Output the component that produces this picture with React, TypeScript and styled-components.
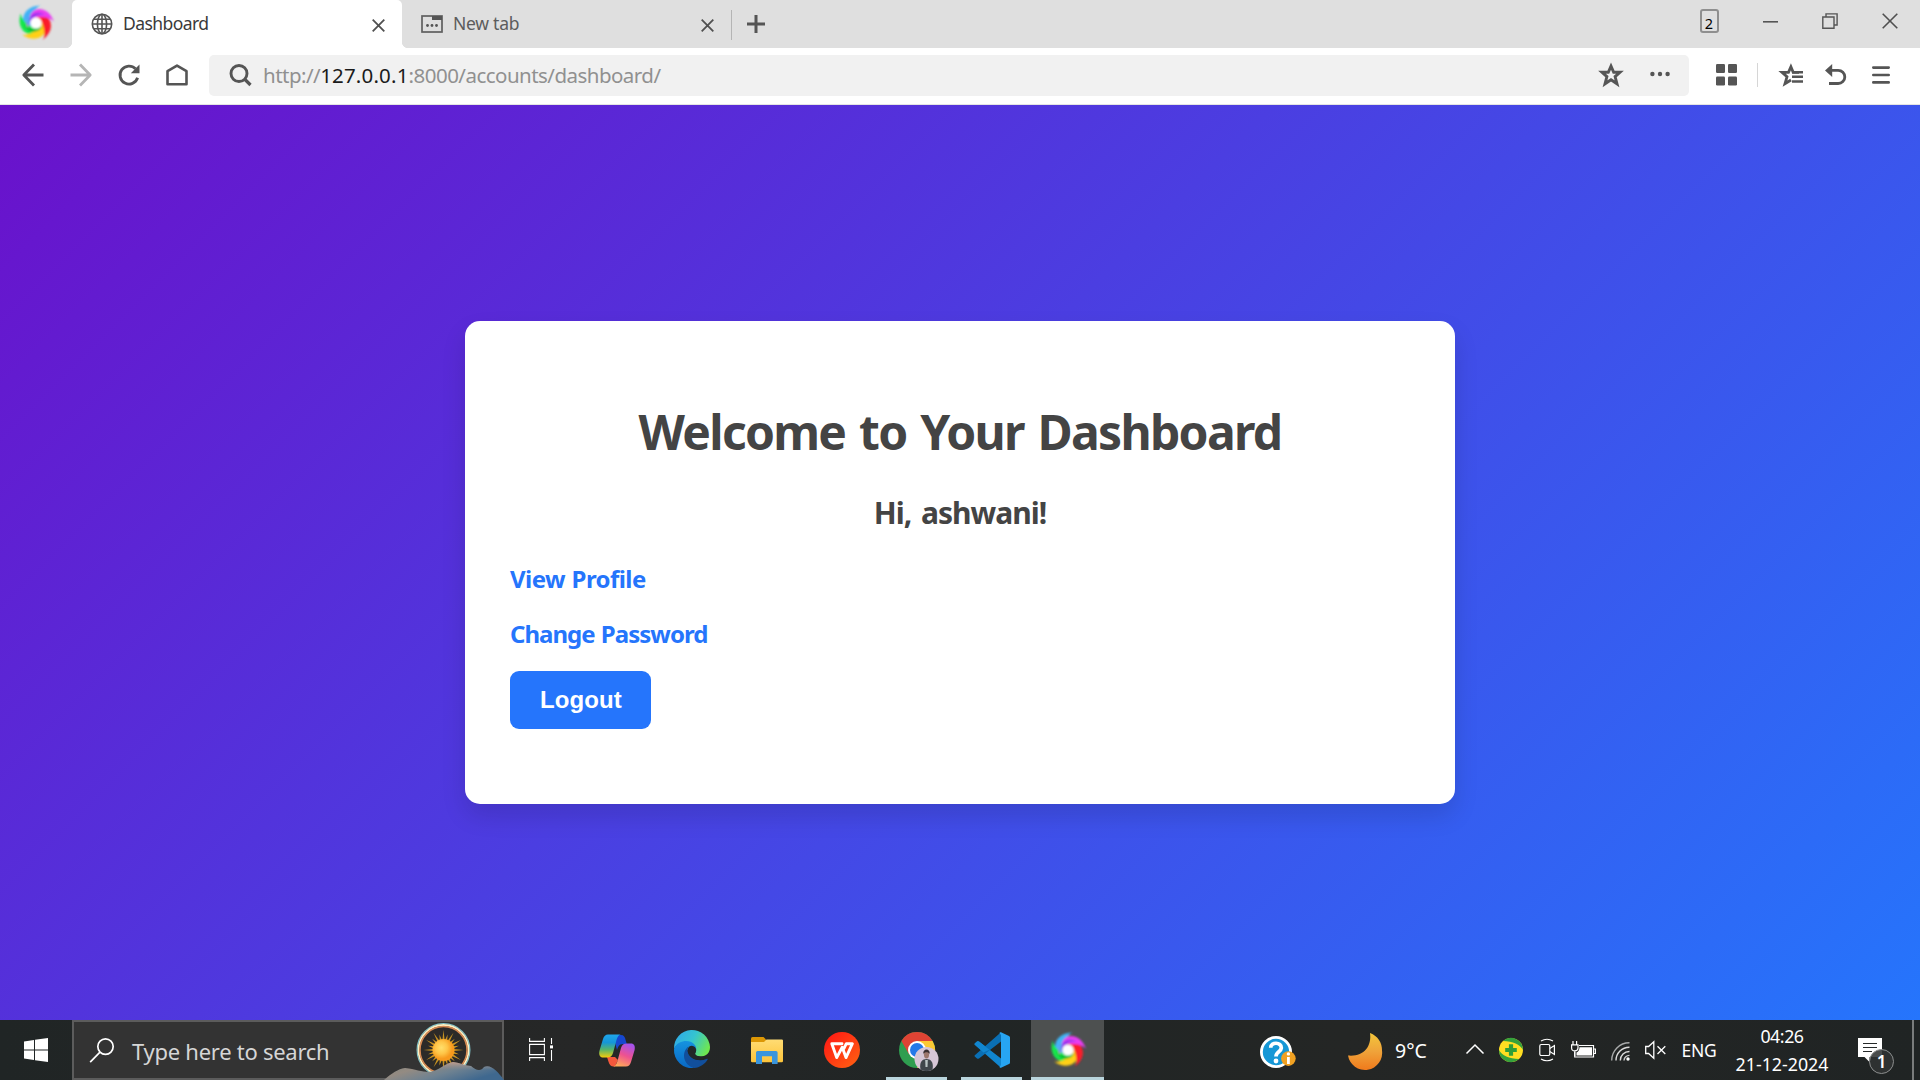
import React from 'react';
import styled, { createGlobalStyle } from 'styled-components';

const Global = createGlobalStyle`
  * { box-sizing: border-box; }
  html, body { margin: 0; padding: 0; overflow: hidden; }
  body { font-family: "Noto Sans", "Open Sans", sans-serif; }
  svg { display: block; flex: none; overflow: visible; }
`;

/* ---------- layout ---------- */

const Screen = styled.div`
  display: flex;
  flex-direction: column;
  width: 1920px;
  height: 1080px;
  overflow: hidden;
`;

const Slot = styled.div<{ $w: number; $left?: number; $dy?: number }>`
  flex: none;
  display: flex;
  align-items: center;
  justify-content: center;
  width: ${(p) => p.$w}px;
  height: 100%;
  margin-left: ${(p) => p.$left ?? 0}px;
  padding-top: ${(p) => Math.max(0, (p.$dy ?? 0) * 2)}px;
  padding-bottom: ${(p) => Math.max(0, -(p.$dy ?? 0) * 2)}px;
`;

const Spacer = styled.div`
  flex: 1;
`;

/* ---------- browser chrome ---------- */

const TabStrip = styled.header`
  flex: none;
  display: flex;
  align-items: stretch;
  height: 48px;
  background: #dfdfdf;
`;

const Tab = styled.div<{ $active?: boolean }>`
  position: relative;
  display: flex;
  align-items: center;
  width: ${(p) => (p.$active ? 330 : 329)}px;
  height: 48px;
  padding: 0 17px 0 19px;
  border-radius: 5px 5px 0 0;
  background: ${(p) => (p.$active ? '#fff' : 'transparent')};
  color: ${(p) => (p.$active ? '#3a3a3a' : '#5c5c5c')};

  &::before,
  &::after {
    content: '';
    display: ${(p) => (p.$active ? 'block' : 'none')};
    position: absolute;
    bottom: 0;
    width: 5px;
    height: 5px;
  }
  &::before {
    left: -5px;
    background: radial-gradient(circle at 0 0, transparent 4.6px, #fff 5px);
  }
  &::after {
    right: -5px;
    background: radial-gradient(circle at 100% 0, transparent 4.6px, #fff 5px);
  }
`;

const TabTitle = styled.span<{ $spacing: number }>`
  flex: 1;
  margin-left: 10px;
  font-size: 17.5px;
  line-height: 24px;
  letter-spacing: ${(p) => p.$spacing}px;
  padding-bottom: 2px;
`;

const TabRule = styled.div`
  width: 1px;
  height: 30px;
  margin-top: 10px;
  background: #b4b4b4;
`;

const TabCount = styled.div`
  display: flex;
  align-items: center;
  justify-content: center;
  width: 19px;
  height: 24px;
  border: 2px solid #8f8f8f;
  border-radius: 3px;
  padding-top: 4px;
  font-size: 14.5px;
  line-height: 18px;
  color: #000;
`;

const Toolbar = styled.nav`
  flex: none;
  display: flex;
  align-items: center;
  height: 57px;
  padding: 0 16px 2px 9px;
  background: #fff;
  border-bottom: 1px solid #e4e4e4;
`;

const AddressBar = styled.div`
  display: flex;
  align-items: center;
  width: 1480px;
  height: 41px;
  margin-left: 8px;
  padding-left: 20px;
  border-radius: 5px;
  background: #f1f1f1;
`;

const Url = styled.span`
  flex: 1;
  margin-left: 11px;
  font-size: 20.5px;
  line-height: 30px;
  color: #909090;
  letter-spacing: -0.53px;

  b {
    font-weight: 400;
    color: #1b1b1b;
    letter-spacing: 0.18px;
  }
`;

const ToolbarRule = styled.div`
  width: 1px;
  height: 24px;
  background: #d6d6d6;
`;

/* ---------- page ---------- */

const Page = styled.main`
  flex: 1;
  min-height: 0;
  padding-top: 216px;
  background: linear-gradient(135deg, #6a11cb, #2575fc);
`;

const Card = styled.section`
  display: flex;
  flex-direction: column;
  align-items: flex-start;
  width: 990px;
  height: 483px;
  margin: 0 auto;
  padding: 78px 45px 0;
  border-radius: 15px;
  background: #fff;
  box-shadow: 0 12px 24px rgba(0, 0, 0, 0.12);
`;

const Title = styled.h1`
  margin: 0;
  align-self: center;
  font-size: 48px;
  line-height: 66px;
  font-weight: 700;
  letter-spacing: -1.7px;
  word-spacing: 3px;
  color: #444;
`;

const Greeting = styled.h2`
  margin: 28px 0 9px;
  align-self: center;
  font-size: 30px;
  line-height: 40px;
  font-weight: 700;
  letter-spacing: -1px;
  word-spacing: 3px;
  color: #444;
`;

const CardLink = styled.a<{ $spacing: number }>`
  margin-top: 19px;
  font-size: 24px;
  line-height: 36px;
  font-weight: 700;
  letter-spacing: ${(p) => p.$spacing}px;
  word-spacing: 1px;
  color: #2575fc;
  text-decoration: none;
`;

const LogoutButton = styled.button`
  width: 141px;
  height: 58px;
  margin-top: 19px;
  padding: 0 0 0 1px;
  border: 0;
  border-radius: 9px;
  background: #2575fc;
  color: #fff;
  font: 700 24px/30px "Liberation Sans", Arial, sans-serif;
  letter-spacing: 0.1px;
`;

/* ---------- taskbar ---------- */

const Taskbar = styled.footer`
  flex: none;
  display: flex;
  align-items: stretch;
  height: 60px;
  background: linear-gradient(90deg, #202525, #262727 30%, #202525 50%, #242625 70%, #202424);
  color: #fff;
`;

const SearchBox = styled.div`
  position: relative;
  display: flex;
  align-items: center;
  width: 432px;
  padding-left: 16px;
  border: 2px solid #5c5c5c;
  background: #333;
`;

const SearchText = styled.span`
  margin-left: 17px;
  padding-top: 2px;
  font-size: 22px;
  line-height: 30px;
  letter-spacing: -0.27px;
  color: #d6d6d6;
`;

const SearchArt = styled.svg`
  position: absolute;
  right: -2px;
  bottom: -2px;
`;

const TaskApp = styled.div<{ $active?: boolean }>`
  display: flex;
  flex-direction: column;
  align-items: center;
  justify-content: center;
  position: relative;
  width: ${(p) => (p.$active ? 73 : 75)}px;
  margin-left: ${(p) => (p.$active ? 1 : 0)}px;
  background: ${(p) => (p.$active ? '#4d5050' : 'transparent')};
`;

const Running = styled.i<{ $w: number }>`
  position: absolute;
  bottom: 0;
  width: ${(p) => p.$w}px;
  height: 3px;
  background: #b9d5dd;
`;

const Temperature = styled.span`
  width: 61px;
  padding: 2px 0 0 13px;
  align-self: center;
  font-size: 19.5px;
  line-height: 28px;
`;

const Language = styled.span`
  width: 48px;
  margin-left: 4px;
  align-self: center;
  text-align: center;
  font-size: 17.5px;
  line-height: 24px;
  letter-spacing: -0.3px;
`;

const Clock = styled.div`
  display: flex;
  flex-direction: column;
  align-items: center;
  width: 118px;
  padding-top: 2px;
  font-size: 17.8px;
  line-height: 28px;

  span:first-child {
    letter-spacing: -0.45px;
  }
`;

const Notice = styled.div`
  position: relative;
  width: 71px;
  padding: 18px 0 0 17px;
`;

const NoticeCount = styled.span`
  position: absolute;
  left: 28px;
  top: 29px;
  display: flex;
  align-items: center;
  justify-content: center;
  width: 25px;
  height: 25px;
  border: 1px solid #8c8e8e;
  border-radius: 50%;
  background: rgba(48, 51, 51, 0.88);
  font-size: 17px;
  font-weight: 600;
  line-height: 24px;
`;

const PeekEdge = styled.div`
  width: 8px;
  border-left: 2px solid #7a7c7c;
`;

/* ---------- drawings ---------- */

const blade = 'M-9 3C-13 -15 14 -22 18 2C15 -3 8 -5 2 -5.5C-3 -6 -7 -2 -9 3Z';

const Swirl = ({ id }: { id: string }) => (
  <svg width="36" height="36" viewBox="-18 -18 36 36">
    <defs>
      <filter id={id} x="-20%" y="-20%" width="140%" height="140%">
        <feGaussianBlur stdDeviation="0.9" />
      </filter>
    </defs>
    <g filter={`url(#${id})`}>
      {[
        ['#3fb4f7', 288],
        ['#14e64c', 216],
        ['#ffd012', 144],
        ['#fb1f2c', 72],
        ['#e83cf2', 0],
      ].map(([c, r]) => (
        <path key={r} d={blade} fill={c as string} transform={`rotate(${(r as number) - 10})`} />
      ))}
      <path d="M-8.500 2C-11 -5 -7 -13 1 -15C-5 -11 -8 -6 -5 -3Z" fill="#3fb4f7" />
      <path d="M-7 1C-8 -9 2 -13 8 -8C3 -10 -4 -7 -7 1Z" fill="#8a35ec" />
      <path d="M-7 1C-8 -9 2 -13 8 -8C3 -10 -4 -7 -7 1Z" fill="#07b928" transform="rotate(216)" />
      <circle r="5.6" fill="#fff" />
    </g>
  </svg>
);

const Globe = () => (
  <svg width="22" height="22" viewBox="0 0 22 22" fill="none" stroke="#555" strokeWidth="1.6">
    <circle cx="11" cy="11" r="9.7" />
    <ellipse cx="11" cy="11" rx="4.6" ry="9.7" />
    <path d="M11 1.5v19M1.5 11h19M3 6.3h16M3 15.7h16" />
  </svg>
);

const NewTabIcon = () => (
  <svg width="22" height="18" viewBox="0 0 22 18">
    <rect x="1" y="1" width="20" height="16" fill="none" stroke="#606060" strokeWidth="1.7" />
    <path d="M11 1h10v4H11z" fill="#555" />
    <g fill="#555">
      <circle cx="6.5" cy="10.5" r="1.4" />
      <circle cx="11" cy="10.5" r="1.4" />
      <circle cx="15.5" cy="10.5" r="1.4" />
    </g>
  </svg>
);

const Cross = ({ size, w }: { size: number; w: number }) => (
  <svg width={size} height={size} viewBox={`0 0 ${size} ${size}`} stroke="#505050" strokeWidth={w}>
    <path d={`M.7 .7L${size - 0.7} ${size - 0.7}M${size - 0.7} .7L.7 ${size - 0.7}`} />
  </svg>
);

const Arrow = ({ color, flip }: { color: string; flip?: boolean }) => (
  <svg width="22" height="24" viewBox="0 0 22 24" fill="none" stroke={color} strokeWidth="2.8">
    <path transform={flip ? 'matrix(-1 0 0 1 22 0)' : undefined} d="M12 1.5L1.8 12L12 22.5M2 12H21.5" strokeLinejoin="round" />
  </svg>
);

const Reload = () => (
  <svg width="22" height="22" viewBox="0 0 22 22">
    <path d="M17.5 4.8A9 9 0 1 0 19.6 13.8" fill="none" stroke="#555" strokeWidth="2.8" />
    <path d="M21.5 .6V9.3H12.8Z" fill="#555" />
  </svg>
);

const Home = () => (
  <svg width="22" height="22" viewBox="0 0 22 22" fill="none" stroke="#555" strokeWidth="2.6" strokeLinejoin="round">
    <path d="M1.5 7.2L11 1.6L20.5 7.2V20.3H1.5Z" />
  </svg>
);

const SearchGlass = () => (
  <svg width="23" height="22" viewBox="0 0 23 22" fill="none" stroke="#555" strokeWidth="2.9">
    <circle cx="10" cy="9.5" r="8" />
    <path d="M15.5 15L21.5 21" strokeWidth="3.2" />
  </svg>
);

const Star = () => (
  <svg width="24" height="24" viewBox="0 0 24 24" fill="none" stroke="#555" strokeWidth="2.9">
    <path d="M12 3.200L14.700 9.300H21L16.100 13.600L18 20.800L12 16.800L6 20.800L7.900 13.600L3 9.300H9.300Z" />
  </svg>
);

const Dots = () => (
  <svg width="20" height="6" viewBox="0 0 20 6" fill="#555">
    <circle cx="2.4" cy="3" r="2.2" />
    <circle cx="10" cy="3" r="2.2" />
    <circle cx="17.6" cy="3" r="2.2" />
  </svg>
);

const Tiles = () => (
  <svg width="21" height="22" viewBox="0 0 21 22" fill="#555">
    {[0, 12].map((x) => [0, 12.5].map((y) => <rect key={`${x}-${y}`} x={x} y={y} width="9" height="9" rx="1.2" />))}
  </svg>
);

const Favourites = () => (
  <svg width="24" height="24" viewBox="0 0 24 24">
    <path d="M20 9.3H14.2L11.9 3.8L9.5 9.3H3L8 13.8L6 20.7L12 17" fill="none" stroke="#555" strokeWidth="2.8" />
    <path d="M13 9.2H24M13 13.8H24M13 18.4H24" stroke="#555" strokeWidth="2.5" />
  </svg>
);

const Undo = () => (
  <svg width="22" height="22" viewBox="0 0 22 22">
    <path d="M4 6.3H13.2A6.6 6.6 0 0 1 13.2 19.5H4" fill="none" stroke="#555" strokeWidth="2.8" />
    <path d="M7.2 0V13L0 6.4Z" fill="#555" />
  </svg>
);

const Menu = () => (
  <svg width="18" height="18" viewBox="0 0 18 18" stroke="#555" strokeWidth="2.6" strokeLinecap="round">
    <path d="M1.3 1.6H16.7M1.3 9H16.7M1.3 16.4H16.7" />
  </svg>
);

const Restore = () => (
  <svg width="16" height="16" viewBox="0 0 16 16" fill="none" stroke="#555" strokeWidth="1.4">
    <path d="M4 4V.9H15.1V12H12M.8 4H12V15.2H.8Z" />
  </svg>
);

const WindowsLogo = () => (
  <svg width="24" height="24" viewBox="0 0 24 24" fill="#fff">
    <path d="M0 3.4L10 2V11.4H0ZM11 1.8L24 0V11.4H11ZM0 12.5H10V22L0 20.6ZM11 12.5H24V24L11 22.2Z" />
  </svg>
);

const TaskGlass = () => (
  <svg width="25" height="25" viewBox="0 0 25 25" fill="none" stroke="#fff" strokeWidth="1.7">
    <circle cx="15.500" cy="8.6" r="7.7" />
    <path d="M10 14.2L.2 24.2" />
  </svg>
);

const rays = Array.from({ length: 24 }, (_, i) => i * 15);

const hills =
  'M0 60C8 53 14 49 21 48C31 49 38 52 45 52C54 51 62 43 69 42C77 43 82 46 87 46C91 50 97 52 100 47C107 44 114 52 120 60Z';

const SunArt = () => (
  <SearchArt width="120" height="60" viewBox="0 0 120 60">
    <defs>
      <radialGradient id="sun" cx=".4" cy=".4">
        <stop offset="0" stopColor="#ffdf6b" />
        <stop offset=".55" stopColor="#fec548" />
        <stop offset="1" stopColor="#f79a1d" />
      </radialGradient>
      <linearGradient id="hill" x1="0" y1="0" x2="1" y2=".5">
        <stop offset="0" stopColor="#7b8580" />
        <stop offset=".35" stopColor="#948b82" />
        <stop offset=".65" stopColor="#6f8291" />
        <stop offset="1" stopColor="#3f688f" />
      </linearGradient>
      <linearGradient id="haze" x1="0" y1="0" x2="0" y2="1">
        <stop offset="0" stopColor="#d5a38f" stopOpacity=".75" />
        <stop offset=".45" stopColor="#9a938e" stopOpacity="0" />
      </linearGradient>
    </defs>
    <circle cx="59.5" cy="30" r="26" fill="#2c2a28" />
    <circle cx="59.5" cy="30" r="26.4" fill="none" stroke="#7fc3c9" strokeWidth="1.2" />
    <circle cx="59.5" cy="30" r="25" fill="none" stroke="#fff0c2" strokeWidth="1.8" />
    <circle cx="59.5" cy="30" r="23.5" fill="none" stroke="#d88a52" strokeWidth="1.5" />
    <g fill="#c99422">
      {rays.map((a, i) => (
        <path key={a} d={`M-1.1 -10L0 ${i % 2 ? -16 : -20}L1.1 -10Z`} transform={`translate(59.5 30) rotate(${a})`} />
      ))}
    </g>
    <circle cx="59.5" cy="30" r="11" fill="url(#sun)" />
    <path d={hills} fill="url(#hill)" />
    <path d={hills} fill="url(#haze)" />
  </SearchArt>
);

const TaskView = () => (
  <svg width="25" height="23" viewBox="0 0 25 23" fill="none" stroke="#fff" strokeWidth="1.1">
    <path d="M.6 0V3.4H15.4V0M.6 6.4H15.4V16.6H.6ZM.6 23V19.6H15.4V23M22.5 0V6M22.5 12V23" />
    <path d="M21 7.4h3v3h-3z" fill="#fff" stroke="none" />
  </svg>
);

const Copilot = () => (
  <svg width="36" height="33" viewBox="0 0 36 33">
    <defs>
      <linearGradient id="cpA" x1="0" y1="0" x2="0" y2="1">
        <stop offset="0" stopColor="#1fa6ec" />
        <stop offset=".35" stopColor="#1596d8" />
        <stop offset=".65" stopColor="#55b46c" />
        <stop offset="1" stopColor="#f5cc0b" />
      </linearGradient>
      <linearGradient id="cpB" x1=".7" y1="0" x2=".3" y2="1">
        <stop offset="0" stopColor="#a552ec" />
        <stop offset=".5" stopColor="#ee5290" />
        <stop offset="1" stopColor="#ffab58" />
      </linearGradient>
    </defs>
    <path d="M14 1H22C25 1 26 3 26.6 6L27.8 10H24C20 10 19 13 18 16Z" fill="#1647cf" />
    <path d="M8 23H16L19 26L16 32.5C12 33 10.5 31 9.6 28Z" fill="#f4583c" />
    <path d="M9 .5H22C19 1 18 4 17 8L14 19C13 22 11.5 23.5 8 23.5H4C1 23.5 -.4 21 .4 17L4 5C5 2 6.5 .5 9 .5Z" fill="url(#cpA)" />
    <path d="M27 32.5H14C17 32 18 29 19 25L22 14C23 11 24.5 9.6 28 9.6H32C35 9.6 36.4 12 35.6 16L32 28C31 31 29.5 32.5 27 32.5Z" fill="url(#cpB)" />
  </svg>
);

const Edge = () => (
  <svg width="36" height="36" viewBox="0 0 36 36">
    <defs>
      <linearGradient id="edTop" x1="0" y1=".2" x2="1" y2=".6">
        <stop offset="0" stopColor="#2ea9e9" />
        <stop offset=".5" stopColor="#35c4d0" />
        <stop offset="1" stopColor="#6fe74f" />
      </linearGradient>
      <linearGradient id="edLow" x1="0" y1="0" x2="0" y2="1">
        <stop offset="0" stopColor="#1593e0" />
        <stop offset="1" stopColor="#0968c4" />
      </linearGradient>
    </defs>
    <path d="M0 17A18 18 0 0 1 36 15C36 21 32 24.5 27 24.5C22 24.5 20 22.5 21.5 20.5C23.5 17 20 12 14 11C7 10 2 13 0 17Z" fill="url(#edTop)" />
    <path d="M0 17C2 11 8 9 12 9C20 9 24 15 21.6 20C20 17 16 14.5 13.5 18C9 23 12 31 20 36A18 18 0 0 1 0 17Z" fill="url(#edLow)" />
    <path d="M14.500 14.500C7 20 9 33 20 36C26 35.5 31 32 33.6 27.4C34 26.6 33 26.5 32.4 26.9C25 30 16 27 14 20.5C13.3 18 13.5 16 14.5 14.5Z" fill="#114f9c" />
    <path d="M21.500 20.500C23.300 17.500 21.500 14.500 18.500 13.900C14.500 13.500 13.300 17 14 20.500C15 24 18 26.800 22 27.700C24 28.100 27 28 29 27.500L32 24C30 24.800 28.500 24.600 27 24.500C22.500 24.300 20.300 22.500 21.500 20.500Z" fill="#222727" />
  </svg>
);

const Explorer = () => (
  <svg width="32" height="27" viewBox="0 0 32 27">
    <defs>
      <linearGradient id="fold" x1="0" y1="0" x2="0" y2="1">
        <stop offset="0" stopColor="#ffdc74" />
        <stop offset="1" stopColor="#fdc43a" />
      </linearGradient>
    </defs>
    <path d="M0 1.5Q0 0 1.5 0H12.5L15 2.4V8H0Z" fill="#dc9705" />
    <path d="M0 5H13L15.5 2.4H30.8Q32 2.4 32 3.6V24Q32 25.2 30.8 25.2H1.2Q0 25.2 0 24Z" fill="url(#fold)" />
    <path d="M5 27V15.6Q5 14 6.6 14H25Q26.6 14 26.6 15.6V27H21V19.2H11V27Z" fill="#3a95dc" />
  </svg>
);

const Wps = () => (
  <svg width="36" height="36" viewBox="0 0 36 36">
    <defs>
      <linearGradient id="wps" x1="0" y1="0" x2="1" y2="1">
        <stop offset="0" stopColor="#ff1414" />
        <stop offset="1" stopColor="#ff6412" />
      </linearGradient>
    </defs>
    <circle cx="18" cy="18" r="18" fill="url(#wps)" />
    <path d="M18 11.7H7.8L12.7 25.6L18.2 15.3L22 25.6L28.4 11.7H22.3L20 16.3" fill="none" stroke="#fff" strokeWidth="2.9" strokeLinejoin="round" strokeLinecap="round" />
  </svg>
);

const Chrome = () => (
  <svg width="36" height="36" viewBox="-18 -18 36 36">
    <circle r="18" fill="#2f9e50" />
    <path d="M-15.6 -9A18 18 0 0 1 15.6 -9H0L-7.8 4.5Z" fill="#df4334" />
    <path d="M15.6 -9A18 18 0 0 1 0 18L7.8 4.5L0 -9Z" fill="#fcc934" />
    <circle r="9" fill="#fff" />
    <circle r="7" fill="#2479e8" />
    <g transform="translate(9.500 9)">
      <circle r="12" fill="#d6c6d6" />
      <path d="M-6 10.400C-7.500 3 -4 0 0 0S7.500 3 6 10.400A12 12 0 0 1 -6 10.400Z" fill="#3f464b" />
      <ellipse cx="0" cy="-4.500" rx="2.600" ry="4" fill="#9c766c" />
      <path d="M-3.200 -5C-4 -11 4 -11 3.200 -5C2 -7.500 -2 -7.500 -3.200 -5Z" fill="#3a2e30" />
      <path d="M-1.300 1H1.300L1 8H-1Z" fill="#b9c4c4" />
    </g>
  </svg>
);

const VsCode = () => (
  <svg width="36" height="36" viewBox="0 0 36 36">
    <path d="M1 11.3L3 9.5Q4 8.8 5 9.6L27 26.5V35.8L.8 12.8Q0 12 1 11.3Z" fill="#1186d0" />
    <path d="M1 24.7L3 26.5Q4 27.2 5 26.4L27 9.5V.2L.8 23.2Q0 24 1 24.7Z" fill="#0a6fb4" />
    <path d="M1 11.300L3 9.500Q4 8.800 5 9.600L15.500 17.700L9.500 20.500L.8 12.800Q0 12 1 11.300Z" fill="#1186d0" />
    <path d="M27 .2L35 4Q36 4.6 36 5.6V30.4Q36 31.4 35 32L27 35.8Q26 36 25.4 35L27 33V3L25.4 1Q26 0 27 .2Z" fill="#27a5f2" />
  </svg>
);

const Help = () => (
  <svg width="36" height="34" viewBox="0 0 36 34">
    <circle cx="16" cy="16" r="14.6" fill="#1597d6" stroke="#fff" strokeWidth="2.8" />
    <path d="M10.7 11.8C10.7 5.6 21.6 5.8 21.3 12C21 16 16 15.6 16 20.4" fill="none" stroke="#fff" strokeWidth="3.7" />
    <circle cx="16" cy="25" r="2.4" fill="#fff" />
    <circle cx="28.4" cy="22.6" r="7.3" fill="#f0a122" />
    <path d="M28.4 21V28" stroke="#fff" strokeWidth="2.8" />
    <circle cx="28.4" cy="17.9" r="1.7" fill="#fff" />
  </svg>
);

const Moon = () => (
  <svg width="34" height="34" viewBox="0 0 34 34">
    <defs>
      <linearGradient id="moon" x1="0" y1="0" x2="0" y2="1">
        <stop offset="0" stopColor="#f3c63b" />
        <stop offset=".5" stopColor="#efa33a" />
        <stop offset="1" stopColor="#f07a1c" />
      </linearGradient>
    </defs>
    <path d="M22 0C30 3 34 10 34 17A17 17 0 0 1 0 22.5C15 24 24 14 22 0Z" fill="url(#moon)" />
  </svg>
);

const Chevron = () => (
  <svg width="18" height="10" viewBox="0 0 18 10" fill="none" stroke="#fff" strokeWidth="1.5">
    <path d="M.5 9.5L9 1L17.5 9.5" />
  </svg>
);

const Shield = () => (
  <svg width="24" height="24" viewBox="0 0 24 24">
    <circle cx="12" cy="12" r="12" fill="#ffde22" />
    <path d="M4 3A12 12 0 0 1 24 12C21 6 14 3.500 4 3Z" fill="#35a23c" />
    <path d="M20 21A12 12 0 0 1 0 12C3 18 10 20.500 20 21Z" fill="#35a23c" />
    <path d="M12 6.2V17.8M6.2 12H17.8" stroke="#2f9e38" strokeWidth="4.2" />
  </svg>
);

const Camera = () => (
  <svg width="17" height="22" viewBox="0 0 17 22" fill="none" stroke="#fff" strokeWidth="1.2">
    <rect x=".8" y="5.5" width="10" height="11" rx="1.5" />
    <path d="M10.8 9.5L15.4 6.5V15.5L10.8 12.5M2 2Q8 -1.5 14 2M2 20Q8 23.5 14 20" />
  </svg>
);

const Battery = () => (
  <svg width="25" height="17" viewBox="0 0 25 17">
    <path d="M8 4.5H22.5V16H3.7V11M22.8 8H24.4V12.5H22.8" fill="none" stroke="#fff" strokeWidth="1.2" />
    <path d="M8.500 6.2H21V14.4H5.5V11.5Q8.500 10 8.500 6.2Z" fill="#fff" />
    <path d="M2 0V3.5M5.6 0V3.5M.6 3.8H7V7Q7 9.8 3.8 9.8Q.6 9.8 .6 7ZM3.8 10V15" fill="none" stroke="#fff" strokeWidth="1.2" />
  </svg>
);

const Wifi = () => (
  <svg width="19" height="19" viewBox="0 0 19 19" fill="none" strokeWidth="1.4">
    <path d="M.7 18.5A17.6 17.6 0 0 1 18.5 .8" stroke="#a8aaaa" />
    <path d="M5 18.5A13.3 13.3 0 0 1 18.5 5.2M9.3 18.5A9 9 0 0 1 18.5 9.5" stroke="#dcdcdc" />
    <path d="M13 18.5A5.4 5.4 0 0 1 18.5 13.4" stroke="#c8c8c8" />
    <circle cx="17" cy="17" r="1.7" fill="#fff" />
  </svg>
);

const Muted = () => (
  <svg width="21" height="18" viewBox="0 0 21 18" fill="none" stroke="#fff" strokeWidth="1.3">
    <path d="M.7 5.5H3.6L8.8 .8V17.2L3.6 12.5H.7ZM12.5 5.2L20.3 13M20.3 5.2L12.5 13" />
  </svg>
);

const Message = () => (
  <svg width="24" height="25" viewBox="0 0 24 25">
    <path d="M0 0H24V19H11.5V24L6.5 19H0Z" fill="#fff" />
    <path d="M5 5.5H19M5 9.5H19M5 13.5H14" stroke="#262a2a" strokeWidth="1.2" />
  </svg>
);

export default function App() {
  return (
    <Screen>
      <Global />
      <TabStrip>
        <Slot $w={71} $dy={-1}>
          <Swirl id="softTop" />
        </Slot>
        <Slot $w={1} />
        <Tab $active>
          <Globe />
          <TabTitle $spacing={-0.56}>Dashboard</TabTitle>
          <Slot $w={14} $dy={1.5}>
            <Cross size={13} w={1.8} />
          </Slot>
        </Tab>
        <Tab>
          <NewTabIcon />
          <TabTitle $spacing={-0.25}>New tab</TabTitle>
          <Slot $w={13} $dy={1.5}>
            <Cross size={13} w={1.8} />
          </Slot>
        </Tab>
        <TabRule />
        <Slot $w={48}>
          <svg width="18" height="18" viewBox="0 0 18 18" stroke="#555" strokeWidth="3">
            <path d="M9 0V18M0 9H18" />
          </svg>
        </Slot>
        <Spacer />
        <Slot $w={44} $dy={-3}>
          <TabCount>2</TabCount>
        </Slot>
        <Slot $w={60} $left={9} $dy={-2.5}>
          <svg width="15" height="2" viewBox="0 0 15 2">
            <rect width="15" height="1.6" fill="#555" />
          </svg>
        </Slot>
        <Slot $w={60} $dy={-3}>
          <Restore />
        </Slot>
        <Slot $w={60} $dy={-3}>
          <Cross size={16} w={1.6} />
        </Slot>
      </TabStrip>
      <Toolbar>
        <Slot $w={48}><Arrow color="#555" /></Slot>
        <Slot $w={48}><Arrow color="#b5b5b5" flip /></Slot>
        <Slot $w={48}><Reload /></Slot>
        <Slot $w={48}><Home /></Slot>
        <AddressBar>
          <SearchGlass />
          <Url>http://<b>127.0.0.1</b>:8000/accounts/dashboard/</Url>
          <Slot $w={48}><Star /></Slot>
          <Slot $w={50} $dy={-1}><Dots /></Slot>
          <Slot $w={4} />
        </AddressBar>
        <Slot $w={61} $left={7}><Tiles /></Slot>
        <ToolbarRule />
        <Slot $w={46} $left={10}><Favourites /></Slot>
        <Slot $w={44}><Undo /></Slot>
        <Slot $w={46}><Menu /></Slot>
      </Toolbar>
      <Page>
        <Card>
          <Title>Welcome to Your Dashboard</Title>
          <Greeting>Hi, ashwani!</Greeting>
          <CardLink $spacing={-0.57}>View Profile</CardLink>
          <CardLink $spacing={-0.98}>Change Password</CardLink>
          <LogoutButton>Logout</LogoutButton>
        </Card>
      </Page>
      <Taskbar>
        <Slot $w={72}><WindowsLogo /></Slot>
        <SearchBox>
          <TaskGlass />
          <SearchText>Type here to search</SearchText>
          <SunArt />
        </SearchBox>
        <Slot $w={75} $dy={-0.5}><TaskView /></Slot>
        <TaskApp><Copilot /></TaskApp>
        <TaskApp><Edge /></TaskApp>
        <TaskApp><Explorer /></TaskApp>
        <TaskApp><Wps /></TaskApp>
        <TaskApp><Chrome /><Running $w={61} /></TaskApp>
        <TaskApp><VsCode /><Running $w={61} /></TaskApp>
        <Slot $w={1} />
        <TaskApp $active><Swirl id="softTask" /><Running $w={73} /></TaskApp>
        <Spacer />
        <Slot $w={62} $dy={2.5}><Help /></Slot>
        <Slot $w={34} $left={39}><Moon /></Slot>
        <Temperature>9°C</Temperature>
        <Slot $w={36} $left={14} $dy={-1}><Chevron /></Slot>
        <Slot $w={36}><Shield /></Slot>
        <Slot $w={37}><Camera /></Slot>
        <Slot $w={35} $dy={-1}><Battery /></Slot>
        <Slot $w={38} $dy={1}><Wifi /></Slot>
        <Slot $w={32}><Muted /></Slot>
        <Language>ENG</Language>
        <Clock>
          <span>04:26</span>
          <span>21-12-2024</span>
        </Clock>
        <Notice>
          <Message />
          <NoticeCount>1</NoticeCount>
        </Notice>
        <PeekEdge />
      </Taskbar>
    </Screen>
  );
}
